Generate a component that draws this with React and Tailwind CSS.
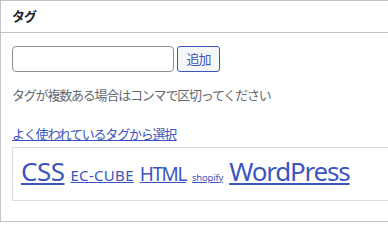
export default function App() {
    const tags = [
        { name: "CSS", cls: "text-[26px] tracking-[-0.5px]" },
        { name: "EC-CUBE", cls: "text-[15px] tracking-[0.3px]" },
        { name: "HTML", cls: "text-[19px] tracking-[-1.4px]" },
        { name: "shopify", cls: "text-[9.5px] tracking-[-0.2px]" },
        { name: "WordPress", cls: "text-[26px] tracking-[-1.2px]" },
    ]

    return (
        <div className="w-[388px] h-[222px] bg-white overflow-hidden font-['Noto_Sans','Noto_Sans_CJK_JP',sans-serif]">
            <div className="w-[420px] h-[222px] border border-[#c3c4c7] bg-white flex flex-col">
                <div className="h-[32px] border-b border-[#c3c4c7] flex items-center px-[11px]">
                    <h2 className="text-[13px] font-bold tracking-[-1px] text-[#1d2327] leading-none">タグ</h2>
                </div>

                <div className="px-[11px] pt-[13px]">
                    <div className="flex gap-[3px]">
                        <input type="text" className="w-[162px] h-[26px] border border-[#8c8f94] rounded-[4px] px-2 text-[14px] outline-none" />
                        <button className="w-[43px] h-[26px] border border-[#3c55c0] rounded-[3px] bg-[#f6f7f7] text-[#3c55c0] text-[13px] tracking-[-1px] leading-none">追加</button>
                    </div>

                    <p className="mt-[15px] text-[13px] tracking-[-1.2px] leading-[16px] text-[#646970]">タグが複数ある場合はコンマで区切ってください</p>

                    <p className="mt-[23px] text-[13px] tracking-[-1.2px] leading-[16px]">
                        <a href="#" className="text-[#3c55c0] underline">よく使われているタグから選択</a>
                    </p>

                    <div className="mt-[5px] h-[54px] border border-[#dcdcde] flex items-baseline gap-[6px] px-2 pt-[10px] whitespace-nowrap">
                        {tags.map(t => (
                            <a key={t.name} href="#" className={`${t.cls} text-[#3c55c0] underline leading-none`}>{t.name}</a>
                        ))}
                    </div>
                </div>
            </div>
        </div>
    )
}
